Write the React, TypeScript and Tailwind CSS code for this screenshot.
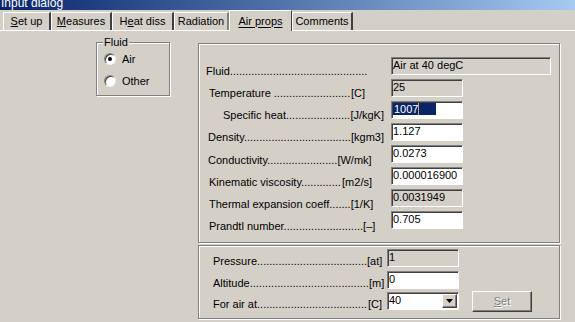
import React from 'react'

const sunken =
  'border border-t-[#808080] border-l-[#808080] border-r-white border-b-white shadow-[inset_1px_1px_0_#404040]'
const etched = 'border border-[#808080] shadow-[1px_1px_0_#fff,inset_1px_1px_0_#fff]'

function DotLabel({ name, dots, unit, className }: { name: string; dots: number; unit?: string; className: string }) {
  return (
    <div className={'flex justify-between whitespace-nowrap leading-[12px] ' + className}>
      <span>
        {name}
        {'.'.repeat(dots)}
      </span>
      {unit && <span>{unit}</span>}
    </div>
  )
}

function Field({ value, readOnly, className }: { value: React.ReactNode; readOnly?: boolean; className: string }) {
  return (
    <div
      className={
        sunken +
        ' h-[18px] pl-[1px] leading-[14px] whitespace-nowrap ' +
        (readOnly ? 'bg-[#d4d0c8] ' : 'bg-white ') +
        className
      }
    >
      {value}
    </div>
  )
}

function Tab({ label, selected, className }: { label: React.ReactNode; selected?: boolean; className: string }) {
  if (selected) {
    return (
      <div
        className={
          'h-[21px] -mb-[1px] z-10 bg-[#d4d0c8] border-l border-t border-white border-r border-r-[#404040] flex items-center justify-center ' +
          className
        }
      >
        <span className="underline underline-offset-2">{label}</span>
      </div>
    )
  }
  return (
    <div
      className={
        'h-[18px] border-l border-t border-white border-r-2 border-r-[#404040] flex items-center justify-center ' +
        className
      }
    >
      {label}
    </div>
  )
}

function Radio({ checked }: { checked?: boolean }) {
  return (
    <div className="w-[12px] h-[12px] rounded-full bg-white border border-t-[#808080] border-l-[#808080] border-r-[#f0f0f0] border-b-[#f0f0f0] shadow-[inset_1px_1px_0_#404040] flex items-center justify-center">
      {checked && <div className="w-[4px] h-[4px] rounded-full bg-black" />}
    </div>
  )
}

export default function App() {
  return (
    <div className="w-[575px] h-[322px] overflow-hidden bg-[#d4d0c8] text-black text-[11px] font-['Liberation_Sans',Arial,sans-serif]">
      {/* title bar */}
      <div className="h-[10px] overflow-hidden bg-linear-to-r from-[#0a246a] to-[#a6caf0]">
        <div className="-mt-[3px] pl-[1px] text-white text-[12px] leading-[12px]">Input dialog</div>
      </div>

      {/* tabs */}
      <div className="h-[21px] flex items-end pl-[3px] border-b border-white">
        <Tab className="w-[48px]" label={<><span className="underline">S</span>et up</>} />
        <Tab className="w-[61px]" label={<><span className="underline">M</span>easures</>} />
        <Tab className="w-[62px]" label={<>H<span className="underline">e</span>at diss</>} />
        <Tab className="w-[55px] border-r border-r-[#808080]" label="Radiation" />
        <Tab selected className="w-[63px]" label="Air props" />
        <Tab className="w-[61px]" label="Comments" />
      </div>

      <div className="flex pt-[12px]">
        {/* Fluid group */}
        <div className={'relative ml-[96px] w-[74px] h-[54px] -mt-[1px] shrink-0 ' + etched}>
          <div className="absolute -top-[7px] left-[6px] px-[1px] bg-[#d4d0c8] leading-[12px]">Fluid</div>
          <div className="flex flex-col gap-[10px] pt-[10px] pl-[7px]">
            <div className="flex items-center gap-[6px]">
              <Radio checked />
              <span className="leading-[12px]">Air</span>
            </div>
            <div className="flex items-center gap-[6px]">
              <Radio />
              <span className="leading-[12px]">Other</span>
            </div>
          </div>
        </div>

        {/* right panels */}
        <div className="ml-[28px] flex flex-col">
          <div className={'w-[362px] h-[200px] pt-[13px] flex flex-col gap-[4px] ' + etched}>
            <div className="flex h-[18px]">
              <div className="w-[192px] shrink-0 pt-[8px]">
                <DotLabel className="ml-[7px] w-[164px]" name="Fluid" dots={45} />
              </div>
              <Field readOnly className="w-[160px] h-[17px]" value="Air at 40 degC" />
            </div>
            <div className="flex h-[18px]">
              <div className="w-[192px] shrink-0 pt-[8px]">
                <DotLabel className="ml-[10px] w-[156px]" name="Temperature " dots={25} unit="[C]" />
              </div>
              <Field readOnly className="w-[72px]" value="25" />
            </div>
            <div className="flex h-[18px]">
              <div className="w-[192px] shrink-0 pt-[8px]">
                <DotLabel className="ml-[24px] w-[161px]" name="Specific heat" dots={21} unit="[J/kgK]" />
              </div>
              <Field
                className="w-[72px]"
                value={
                  <span className="inline-flex mt-[1px] leading-[12px]">
                    <span className="bg-[#0a246a] text-white pl-[1px]">1007</span>
                    <span className="w-[1px] bg-[#c8b060]" />
                    <span className="w-[17px] bg-[#0a246a]" />
                  </span>
                }
              />
            </div>
            <div className="flex h-[18px]">
              <div className="w-[192px] shrink-0 pt-[8px]">
                <DotLabel className="ml-[9px] w-[176px]" name="Density" dots={35} unit="[kgm3]" />
              </div>
              <Field className="w-[72px]" value="1.127" />
            </div>
            <div className="flex h-[18px]">
              <div className="w-[192px] shrink-0 pt-[9px]">
                <DotLabel className="ml-[9px] w-[162px]" name="Conductivity" dots={23} unit="[W/mk]" />
              </div>
              <Field className="w-[72px]" value="0.0273" />
            </div>
            <div className="flex h-[18px]">
              <div className="w-[192px] shrink-0 pt-[9px]">
                <DotLabel className="ml-[10px] w-[163px]" name="Kinematic viscosity" dots={13} unit="[m2/s]" />
              </div>
              <Field className="w-[72px]" value="0.000016900" />
            </div>
            <div className="flex h-[18px]">
              <div className="w-[192px] shrink-0 pt-[9px]">
                <DotLabel className="ml-[10px] w-[164px]" name="Thermal expansion coeff" dots={7} unit="[1/K]" />
              </div>
              <Field readOnly className="w-[72px]" value="0.0031949" />
            </div>
            <div className="flex h-[18px]">
              <div className="w-[192px] shrink-0 pt-[9px]">
                <DotLabel className="ml-[10px] w-[165px]" name="Prandtl number" dots={26} unit="[–]" />
              </div>
              <Field className="w-[72px]" value="0.705" />
            </div>
          </div>

          <div className={'w-[362px] h-[74px] mt-[2px] pt-[3px] flex flex-col gap-[4px] ' + etched}>
            <div className="flex h-[18px]">
              <div className="w-[188px] shrink-0 pt-[6px]">
                <DotLabel className="ml-[14px] w-[168px]" name="Pressure" dots={36} unit="[at]" />
              </div>
              <Field readOnly className="w-[72px] h-[17px]" value="1" />
            </div>
            <div className="flex h-[17px]">
              <div className="w-[188px] shrink-0 pt-[6px]">
                <DotLabel className="ml-[14px] w-[170px]" name="Altitude" dots={39} unit="[m]" />
              </div>
              <Field className="w-[72px] h-[17px]" value="0" />
            </div>
            <div className="flex h-[18px] items-center">
              <div className="w-[188px] shrink-0 self-start pt-[6px]">
                <DotLabel className="ml-[14px] w-[169px]" name="For air at" dots={36} unit="[C]" />
              </div>
              <div className={sunken + ' w-[72px] h-[18px] bg-white flex items-stretch'}>
                <span className="flex-1 pl-[1px] leading-[14px]">40</span>
                <div className="w-[15px] m-[1px] bg-[#d4d0c8] border border-t-white border-l-white border-r-[#404040] border-b-[#404040] shadow-[inset_-1px_-1px_0_#808080] flex items-center justify-center">
                  <svg width="7" height="4" viewBox="0 0 7 4">
                    <path d="M0 0h7L3.5 4z" fill="#000" />
                  </svg>
                </div>
              </div>
              <div className="ml-[13px] w-[60px] h-[21px] border border-t-white border-l-white border-r-[#404040] border-b-[#404040] shadow-[inset_-1px_-1px_0_#808080] flex items-center justify-center text-[#808080] [text-shadow:1px_1px_0_#fff]">
                <span>
                  <span className="underline">S</span>et
                </span>
              </div>
            </div>
          </div>
        </div>
      </div>
    </div>
  )
}
